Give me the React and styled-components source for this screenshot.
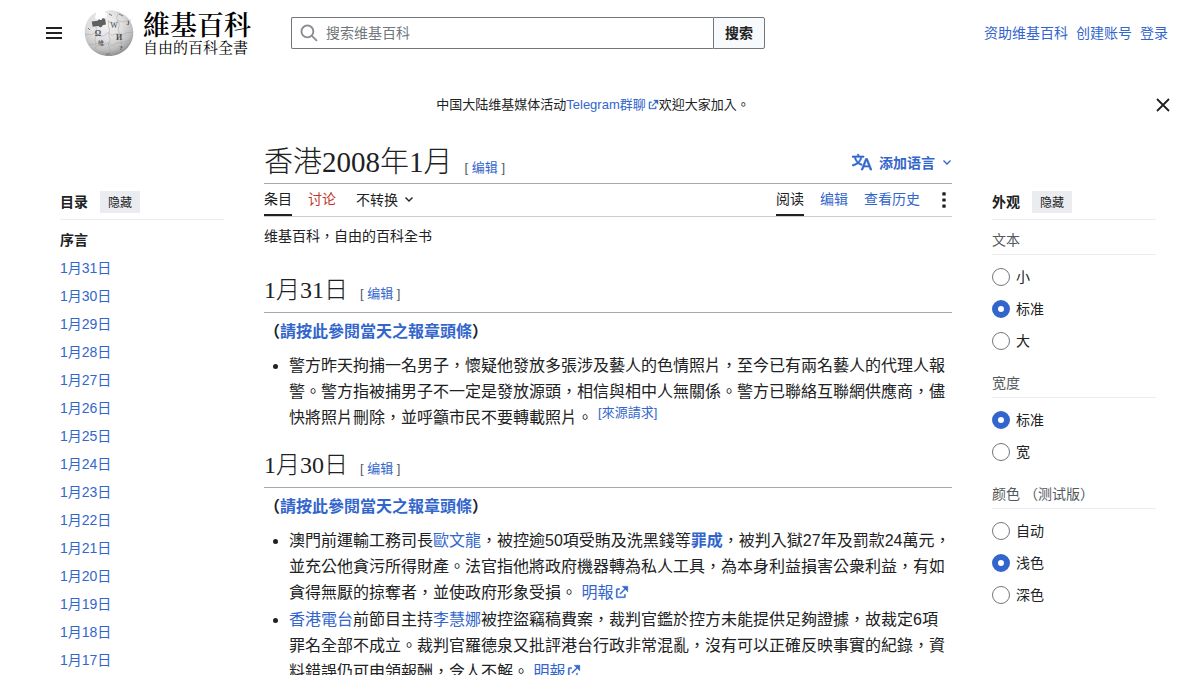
import React from 'react';
import styled, { createGlobalStyle, css } from 'styled-components';

const sans = '"Liberation Sans", "Noto Sans CJK TC", sans-serif';
const serif = '"Liberation Serif", "Noto Sans CJK TC", serif';

const GlobalStyle = createGlobalStyle`
  *, *::before, *::after { box-sizing: border-box; }
  body {
    margin: 0;
    background: #fff;
    color: #202122;
    font-family: ${sans};
    font-size: 14px;
    line-height: 22px;
  }
  button, input { font-family: inherit; color: inherit; }
`;

const Link = styled.a`
  color: ${(p) => (p.$red ? '#bf3c2c' : '#3366cc')};
  font-weight: ${(p) => (p.$bold ? 700 : 'inherit')};
  text-decoration: none;
  &:hover { text-decoration: underline; }
`;

const IconButton = styled.button`
  display: flex;
  align-items: center;
  justify-content: center;
  width: ${(p) => p.$width}px;
  height: 32px;
  padding: 0;
  border: 0;
  background: none;
  cursor: pointer;
`;

/* Site header */

const Header = styled.header`
  display: flex;
  align-items: center;
  height: 66px;
  padding: 0 32px 0 38px;
`;

const Logo = styled.a`
  display: flex;
  align-items: center;
  gap: 9px;
  margin: 0 40px 0 14px;
  color: #000;
  text-decoration: none;
  white-space: nowrap;
`;

const LogoText = styled.span`
  display: flex;
  flex-direction: column;
  width: 108px;
  font-family: "Noto Serif CJK TC", "Noto Sans CJK TC", serif;
`;

const Wordmark = styled.span`
  font-size: 27px;
  line-height: 28px;
  font-weight: 600;
`;

const Tagline = styled.span`
  font-size: 15px;
  line-height: 18px;
`;

const SearchForm = styled.form`
  display: flex;
  flex: 0 1 474px;
  height: 32px;
`;

const SearchField = styled.label`
  display: flex;
  align-items: center;
  flex: 1;
  min-width: 0;
  gap: 8px;
  padding-left: 8px;
  border: 1px solid #72777d;
  border-right: 0;
  border-radius: 2px 0 0 2px;
`;

const SearchInput = styled.input`
  flex: 1;
  min-width: 0;
  padding: 0;
  border: 0;
  outline: 0;
  background: none;
  font-size: 14px;
  &::placeholder { color: #72777d; opacity: 1; }
`;

const SearchButton = styled.button`
  width: 52px;
  padding: 0 0 2px;
  border: 1px solid #72777d;
  border-radius: 0 2px 2px 0;
  background: #f8f9fa;
  font-size: 14px;
  font-weight: 700;
`;

const UserNav = styled.nav`
  display: flex;
  gap: 8px;
  margin-left: auto;
  white-space: nowrap;
`;

const Notice = styled.aside`
  display: flex;
  align-items: center;
  height: 78px;
  padding: 0 27px 0 33px;
  font-size: 13px;
`;

const NoticeText = styled.p`
  flex: 1;
  margin: 0;
  text-align: center;
`;

/* Columns */

const Columns = styled.div`
  display: grid;
  grid-template-columns: 164px minmax(0, 1fr) 164px;
  gap: 40px;
  padding: 0 44px 0 60px;
`;

const Side = styled.aside`
  padding-top: 41px;
`;

const SideHeader = styled.div`
  display: flex;
  align-items: center;
  gap: 12px;
  height: 35px;
  border-bottom: 1px solid #eaecf0;
`;

const SideTitle = styled.h2`
  margin: 0;
  font-size: 14px;
  font-weight: 700;
`;

const HideButton = styled.button`
  width: 40px;
  height: 22px;
  padding: 0 0 2px;
  border: 0;
  background: #eaecf0;
  font-size: 12px;
`;

const TocList = styled.ul`
  margin: 6px 0 0;
  padding: 0;
  list-style: none;
  line-height: 28px;
`;

const TocLink = styled(Link)`
  ${(p) => p.$current && css`
    color: #202122;
    font-weight: 700;
  `}
`;

const OptionGroup = styled.fieldset`
  margin: 0 0 12px;
  padding: 0;
  border: 0;
  &:first-of-type { margin-top: 6px; }
`;

const OptionTitle = styled.legend`
  width: 100%;
  margin-bottom: 6px;
  padding: 0;
  border-bottom: 1px solid #eaecf0;
  color: #54595d;
  line-height: 28px;
`;

const OptionRow = styled.label`
  display: flex;
  align-items: center;
  gap: 6px;
  height: 32px;
`;

const Radio = styled.input`
  appearance: none;
  width: 18px;
  height: 18px;
  margin: 0;
  border: 1px solid #72777d;
  border-radius: 50%;
  background: #fff;
  &:checked { border: 6px solid #3366cc; }
`;

/* Article */

const TitleBar = styled.header`
  display: flex;
  align-items: center;
  justify-content: space-between;
  height: 40px;
  padding-bottom: 3px;
  border-bottom: 1px solid #a2a9b1;
`;

const Heading = styled.div`
  display: flex;
  align-items: baseline;
  gap: 12px;
`;

const PageTitle = styled.h1`
  margin: 0;
  font-family: ${serif};
  font-size: 29px;
  line-height: 36px;
  font-weight: 300;
`;

const SectionHeading = styled(Heading)`
  margin-top: 17px;
  padding-bottom: 4px;
  border-bottom: 1px solid #a2a9b1;
`;

const SectionTitle = styled.h2`
  margin: 0;
  font-family: ${serif};
  font-size: 24px;
  line-height: 35px;
  font-weight: 300;
`;

const EditWrap = styled.span`
  color: #54595d;
  font-size: 13px;
`;

const LanguageButton = styled.button`
  display: flex;
  align-items: center;
  gap: 7px;
  padding: 0;
  border: 0;
  background: none;
  color: #3366cc;
  font-size: 14px;
  font-weight: 700;
`;

const TabBar = styled.nav`
  display: flex;
  gap: 16px;
  height: 33px;
  border-bottom: 1px solid #c8ccd1;
`;

const Tab = styled(Link)`
  display: flex;
  align-items: center;
  height: 32px;
  padding-bottom: 2px;
  ${(p) => p.$current && css`
    color: #202122;
    box-shadow: inset 0 -2px 0 #202122;
  `}
`;

const VariantButton = styled.button`
  display: flex;
  align-items: center;
  gap: 6px;
  margin-right: auto;
  padding: 0 0 2px 4px;
  border: 0;
  background: none;
  font-size: 14px;
`;

const SiteSub = styled.p`
  margin: 0;
  padding: 8px 0 9px;
`;

const Headlines = styled.p`
  margin: 6px 0 8px;
  font-size: 16px;
  line-height: 26px;
  font-weight: 700;
`;

const NewsList = styled.ul`
  margin: 0;
  padding-left: 25px;
  font-size: 16px;
  line-height: 26px;
`;

const NewsItem = styled.li`
  & + & { margin-top: 1px; }
`;

const Source = styled.sup`
  margin-left: 5px;
  font-size: 13px;
  line-height: 1;
`;

const ExternalMark = styled.svg`
  margin-left: 2px;
  vertical-align: -1px;
`;

const ExternalIcon = ({ size }) => (
  <ExternalMark width={size} height={size} viewBox="0 0 12 12" fill="#3366cc" stroke="#3366cc" strokeWidth="0.3" aria-hidden="true">
    <path d="M6 1h5v5L8.86 3.85 4.7 8 4 7.3l4.15-4.16zM2 3h2v1H2v6h6V8h1v2a1 1 0 0 1-1 1H2a1 1 0 0 1-1-1V4a1 1 0 0 1 1-1" />
  </ExternalMark>
);

const Chevron = () => (
  <svg width="10" height="10" viewBox="0 0 10 10" fill="none" stroke="currentColor" strokeWidth="1.4" aria-hidden="true">
    <path d="M1.500 3.500L5 7l3.500-3.500" />
  </svg>
);

const Globe = () => (
  <svg width="50" height="50" viewBox="0 0 50 50" aria-hidden="true">
    <defs>
      <radialGradient id="ball" cx="0.42" cy="0.3" r="0.72">
        <stop offset="0" stopColor="#f6f6f6" />
        <stop offset="0.5" stopColor="#dedede" />
        <stop offset="0.8" stopColor="#bdbdbd" />
        <stop offset="1" stopColor="#8c8c8c" />
      </radialGradient>
    </defs>
    <path
      d="M11.500 4.500l1 1.500-1.500 2.500 1 3 9 .5.500-3 1.500-1-.5-3-2-1c3-1.500 6-2 9-1.500C41 4 49.300 13 49.300 24.500 49.300 38 38.500 48 25 48S.7 37.500.7 24.500C.7 16 4.500 8.500 11.500 4.500z"
      fill="url(#ball)"
    />
    <path d="M7.700 13.500l6-.8c.3-1 1.500-1.500 2.500-.8l1.500.2c-.4-2 3-2.500 3.500-.5l.8 5-3.500.7c.3 2-3.200 2.700-3.800.6l-6 .8z" fill="#606060" />
    <g fill="none" stroke="#a2a2a2" strokeWidth="0.5">
      <path d="M1 27c4-2 6 1 8-1s5-1 6 1 4 1 6 0 2-3 4-2 2 3 4 2 4-2 6-1 3 2 5 0 5-1 9-2" />
      <path d="M5 37c3-2 5 0 7-1s2-3 4-2 3 3 5 2 4-2 5 0 3 2 5 0 5-1 7-1 4-2 8-3" />
      <path d="M12 19c1 3-1 4 0 7s-2 4-1 7 2 5 0 8" />
      <path d="M24 12c2 3-1 5 1 8s-1 5 0 8 2 4 0 7 2 5 1 8 1 3 0 4" />
      <path d="M34 4c1 3-2 4-1 7s3 4 2 7-1 5 1 8-1 4 1 7-1 5 0 8" />
      <path d="M24 14c4-1 5 2 7 1s3-3 5-2 4 1 6 0 3-1 5-1" />
    </g>
    <g fill="#4c4c4c" fontFamily="Liberation Serif, serif" fontSize="8" textAnchor="middle">
      <text x="14" y="28" fontWeight="700">Ω</text>
      <text x="30" y="20">W</text>
      <text x="35" y="32" fontWeight="700">И</text>
      <text x="37" y="42" fontSize="7" fontWeight="700">?</text>
      <text x="44" y="17" fontSize="6" fontWeight="700">J</text>
      <text x="17" y="37" fontSize="6" fontFamily="Noto Sans CJK TC, sans-serif">維</text>
    </g>
    <g fill="none" stroke="#777" strokeWidth="1">
      <path d="M25 6l3 1.500M35 6l4 2M4 20l2 2M22 46h4" />
    </g>
  </svg>
);

const EditLink = () => (
  <EditWrap>[ <Link href="#edit">编辑</Link> ]</EditWrap>
);

const Section = ({ title, children }) => (
  <section>
    <SectionHeading>
      <SectionTitle>{title}</SectionTitle>
      <EditLink />
    </SectionHeading>
    <Headlines>（<Link href="#headlines">請按此參閱當天之報章頭條</Link>）</Headlines>
    <NewsList>{children}</NewsList>
  </section>
);

const Paper = () => (
  <Link href="#mingpao">明報<ExternalIcon size={14} /></Link>
);

const days = Array.from({ length: 15 }, (_, i) => `1月${31 - i}日`);

const optionGroups = [
  { name: 'text', title: '文本', options: ['小', '标准', '大'], selected: '标准' },
  { name: 'width', title: '宽度', options: ['标准', '宽'], selected: '标准' },
  { name: 'color', title: '颜色 （测试版）', options: ['自动', '浅色', '深色'], selected: '浅色' },
];

export default function App() {
  return (
    <>
      <GlobalStyle />
      <Header>
        <IconButton $width={32} aria-label="主菜单">
          <svg width="16" height="12" viewBox="0 0 16 12" fill="#202122" aria-hidden="true">
            <path d="M0 0h16v2H0zM0 5h16v2H0zM0 10h16v2H0z" />
          </svg>
        </IconButton>
        <Logo href="#home">
          <Globe />
          <LogoText>
            <Wordmark>維基百科</Wordmark>
            <Tagline>自由的百科全書</Tagline>
          </LogoText>
        </Logo>
        <SearchForm role="search" onSubmit={(e) => e.preventDefault()}>
          <SearchField>
            <svg width="18" height="18" viewBox="0 0 17 17" fill="none" stroke="#8a8e93" strokeWidth="1.800" aria-hidden="true">
              <circle cx="7" cy="7" r="5.6" />
              <path d="M11 11l5 5" />
            </svg>
            <SearchInput type="search" placeholder="搜索维基百科" aria-label="搜索维基百科" />
          </SearchField>
          <SearchButton type="submit">搜索</SearchButton>
        </SearchForm>
        <UserNav>
          <Link href="#donate">资助维基百科</Link>
          <Link href="#signup">创建账号</Link>
          <Link href="#login">登录</Link>
        </UserNav>
      </Header>

      <Notice>
        <NoticeText>
          中国大陆维基媒体活动<Link href="#telegram">Telegram群聊<ExternalIcon size={11} /></Link>欢迎大家加入。
        </NoticeText>
        <IconButton $width={20} aria-label="关闭">
          <svg width="14" height="14" viewBox="0 0 14 14" stroke="#202122" strokeWidth="1.8" aria-hidden="true">
            <path d="M1 1l12 12M13 1L1 13" />
          </svg>
        </IconButton>
      </Notice>

      <Columns>
        <Side as="nav">
          <SideHeader>
            <SideTitle>目录</SideTitle>
            <HideButton>隐藏</HideButton>
          </SideHeader>
          <TocList>
            <li><TocLink href="#top" $current>序言</TocLink></li>
            {days.map((day) => (
              <li key={day}><TocLink href={`#${day}`}>{day}</TocLink></li>
            ))}
          </TocList>
        </Side>

        <main>
          <TitleBar>
            <Heading>
              <PageTitle>香港2008年1月</PageTitle>
              <EditLink />
            </Heading>
            <LanguageButton>
              <svg width="20" height="20" viewBox="0 0 20 20" fill="currentColor" stroke="currentColor" strokeWidth="0.6" aria-hidden="true">
                <path d="M20 18h-1.440a.6.6 0 0 1-.4-.12.8.8 0 0 1-.23-.31L17 15h-5l-1 2.540a.8.8 0 0 1-.22.3.6.6 0 0 1-.4.14H9l4.550-11.470h1.890zm-3.530-4.310L14.890 9.500a12 12 0 0 1-.39-1.240q-.09.37-.19.690l-.19.560-1.580 4.190zm-6.300-1.580a13.400 13.400 0 0 1-2.910-1.410 11.460 11.460 0 0 0 2.810-5.370H12V4H7.310a4 4 0 0 0-.2-.56C6.870 2.790 6.600 2 6.600 2l-1.470.5s.4.890.6 1.500H0v1.330h2.150A11.230 11.230 0 0 0 5 10.700a17.200 17.200 0 0 1-5 2.100q.56.82.87 1.380a23.300 23.300 0 0 0 5.220-2.510 15.600 15.600 0 0 0 3.560 1.770zM3.630 5.330h4.910a8.100 8.100 0 0 1-2.450 4.450 9.100 9.100 0 0 1-2.460-4.450" />
              </svg>
              添加语言
              <Chevron />
            </LanguageButton>
          </TitleBar>
          <TabBar>
            <Tab href="#article" $current>条目</Tab>
            <Tab href="#talk" $red>讨论</Tab>
            <VariantButton>不转换 <Chevron /></VariantButton>
            <Tab href="#read" $current>阅读</Tab>
            <Tab href="#edit">编辑</Tab>
            <Tab href="#history">查看历史</Tab>
            <IconButton $width={16} aria-label="更多">
              <svg width="4" height="16" viewBox="0 0 4 16" fill="#202122" aria-hidden="true">
                <rect x="0.3" y="0.3" width="3.4" height="3.200" rx="0.6" />
                <rect x="0.3" y="6.400" width="3.4" height="3.200" rx="0.6" />
                <rect x="0.3" y="12.500" width="3.4" height="3.200" rx="0.6" />
              </svg>
            </IconButton>
          </TabBar>
          <SiteSub>维基百科，自由的百科全书</SiteSub>

          <Section title="1月31日">
            <NewsItem>
              警方昨天拘捕一名男子，懷疑他發放多張涉及藝人的色情照片，至今已有兩名藝人的代理人報警。警方指被捕男子不一定是發放源頭，相信與相中人無關係。警方已聯絡互聯網供應商，儘快將照片刪除，並呼籲市民不要轉載照片。<Source><Link href="#source">[來源請求]</Link></Source>
            </NewsItem>
          </Section>

          <Section title="1月30日">
            <NewsItem>
              澳門前運輸工務司長<Link href="#ao">歐文龍</Link>，被控逾50項受賄及洗黑錢等<Link href="#guilty" $bold>罪成</Link>，被判入獄27年及罰款24萬元，並充公他貪污所得財產。法官指他將政府機器轉為私人工具，為本身利益損害公衆利益，有如貪得無厭的掠奪者，並使政府形象受損。 <Paper />
            </NewsItem>
            <NewsItem>
              <Link href="#rthk">香港電台</Link>前節目主持<Link href="#lee">李慧娜</Link>被控盜竊稿費案，裁判官鑑於控方未能提供足夠證據，故裁定6項罪名全部不成立。裁判官羅德泉又批評港台行政非常混亂，沒有可以正確反映事實的紀錄，資料錯誤仍可申領報酬，令人不解。 <Paper />
            </NewsItem>
          </Section>
        </main>

        <Side>
          <SideHeader>
            <SideTitle>外观</SideTitle>
            <HideButton>隐藏</HideButton>
          </SideHeader>
          {optionGroups.map((group) => (
            <OptionGroup key={group.name}>
              <OptionTitle>{group.title}</OptionTitle>
              {group.options.map((option) => (
                <OptionRow key={option}>
                  <Radio type="radio" name={group.name} defaultChecked={option === group.selected} />
                  {option}
                </OptionRow>
              ))}
            </OptionGroup>
          ))}
        </Side>
      </Columns>
    </>
  );
}
